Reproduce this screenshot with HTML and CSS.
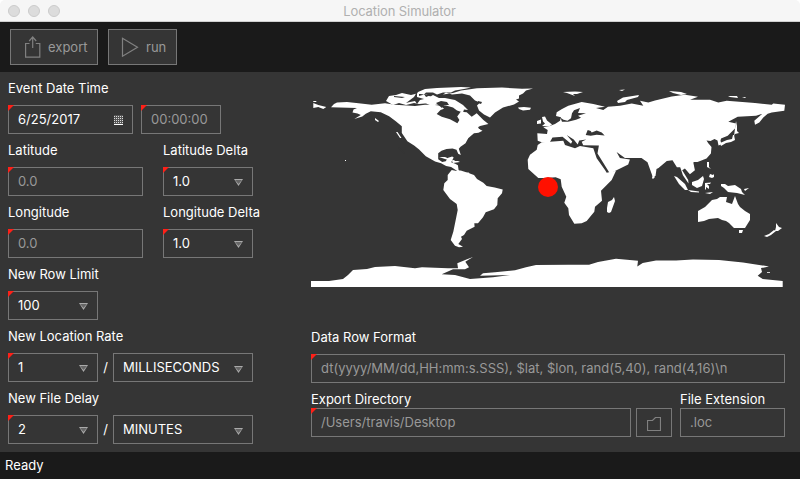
FILE: index.html
```html
<!DOCTYPE html>
<html lang="en">
<head>
<meta charset="utf-8">
<title>Location Simulator</title>
<link rel="stylesheet" href="styles.css">
</head>
<body>
<div class="window">
  <header class="titlebar">
    <div class="lights"><i></i><i></i><i></i></div>
    <span class="title">Location Simulator</span>
  </header>
  <nav class="toolbar">
    <button class="tool export"><svg width="16" height="22" viewBox="0 0 16 22"><path d="M4.500 7.500H.6v13.700h14.200V7.500h-4M7.700 12V1M4.200 5 7.700 1l3.500 4"/></svg><span>export</span></button>
    <button class="tool run"><svg width="18" height="21" viewBox="0 0 18 21"><path d="M1.500 1.300v18l15-9z"/></svg><span>run</span></button>
  </nav>
  <main class="content">
    <section class="settings">
      <div class="row"><div class="group"><label>Event Date Time</label>
        <div class="fields"><div class="field req w125"><span>6/25/2017</span><svg class="cal" width="9" height="10" viewBox="0 0 9 10"><path d="M0 1.500h9M0 3.500h9M0 5.500h9M0 7.500h9" stroke-dasharray="1 1"/><path class="base" d="M0 9.500h9"/></svg></div><div class="field req dim w80"><span>00:00:00</span></div></div></div></div>
      <div class="row"><div class="group"><label>Latitude</label><div class="field req dim w135">0.0</div></div><div class="group"><label>Latitude Delta</label><div class="field req w90">1.0<b class="arrow"></b></div></div></div>
      <div class="row"><div class="group"><label>Longitude</label><div class="field req dim w135">0.0</div></div><div class="group"><label>Longitude Delta</label><div class="field req w90">1.0<b class="arrow"></b></div></div></div>
      <div class="row"><div class="group"><label>New Row Limit</label><div class="field req w90">100<b class="arrow"></b></div></div></div>
      <div class="row"><div class="group"><label>New Location Rate</label><div class="fields tight"><div class="field req w90">1<b class="arrow"></b></div><span class="slash">/</span><div class="field w140"><span>MILLISECONDS</span><b class="arrow low"></b></div></div></div></div>
      <div class="row"><div class="group"><label>New File Delay</label><div class="fields tight"><div class="field req w90">2<b class="arrow"></b></div><span class="slash">/</span><div class="field w140"><span>MINUTES</span><b class="arrow low"></b></div></div></div></div>
    </section>
    <section class="output">
      <svg class="map" width="474" height="210" viewBox="311 80 474 210">
        <g class="land">
          <path d="M331 107.300L334 104l3-1.500 10-.5 11.500 1.300 13.200 1.400 13.300-1.400 10 1.400 20 1.300 10-1.300h8l8 1 3 3-3.500 1.200-3.800 4 5 2.800 8.300 2.600 7.400 4 2-3.300-2.200-3.500 3.500-4.800 6 .6 5 4.400 5-3.400 6.700 6.700 5 4-8.300 2-4 2.300 3 .6 3.400 1.800-4 2-4.500.6-5.800 5-2.700 5-5 3.500-1.700 2 2 6.200-2.600-1.300-1.700-4-4-1.200-6 .6-5 1.600-3.300 2.500v6l4 2.700 3.500-.7 2.500-3.400 4-1.300 1.500 1-2.500 4.800 4 1.500 2.700 1.500.7 4.700 4.300 3.300 6-.8.5 1.500-5-.5-3.300 1-5-4.300-5-3.300-5-1-5-2.700-6-1.700-9.300-5.300-6.700-6.600-5-4-6.700-4.400-5.600-8.300v-6.700l-6-5-6.700-5-8.300-4-10-1-5 2.500-3.500 2.800-8 2.500 6.500-4-3.300-1.500-5-1 1-3 3.500-1.500z"/>
          <path d="M313.300 101h3v1h-3zM313.300 103l5 2 8 2-3 2-5-2-5 1zM386 101l3-5 7-1 6-2 9 2 8-2v3l7-2 5 3-3 3 3 3-12 1-5-1-8 2-7-2-6 2zM418 92l7-3 12-1 12-.5 12-.5 10 .5-7 1.500-9 1.500-4 2-8 0-6 2-4-2h-7l-2 2-7-1zM420 99l8-1 5-3 6 3h6l10 2 8 5 5 5-4-.5-1 3-6-2-4-3-7-2-8-1-7 1-5-2z"/>
          <path d="M443 94.500l10-1.500 8-2.500 16-2.200 25-.8 20 1.300 11-.3-7 2-3 3-4 2v3l-3 1 3 2-5 3-11 3-8 5-5 5-6-3-5-4-2-5 3-3-5-2-5-5-8-2-10 1-6-2zM518 107.500l6-.5 7 .8-1 2-7 .7-4-1.500zM439 157l6 0 7 3 3 0-1 1-6-1zM452 161l6 0 2 1-7 1zM472 126l5-1 2 4 1 0 0 1-8-2zM396 132h1.500l4 6h-1.500zM375 118l4 3-1 1-3-2zM345 160h1v1h-1z"/>
          <path d="M447.700 175l4-5 5 1 4-.5 7 2.200 6.300 2.300 3 4 6.300 3.700 3.400 3.300 8 1.500 8 2-.7 3.800-4.300 5-.4 6.700-3.300 4.300-8.300 3-2.700 5-5 6h-3.700l.3 3.400-7.900 4-2.700 4.300-3 1.700 1 2.300-3.700 5 4.700 2.700-4 .5-4-1.500-4.300-5.700 2.600-8.300 2.400-11.700 2-10-1-6-6.700-5-6.700-9 1-6.700 3.400-3.300z"/>
          <path d="M541.700 142.300l-4-1.600-.4-7.400 9.700.7.700-4-4.400-2.700 5.700-1 6-2.300 5-3.300 1-3.400-5-1.300.7-3.700 5.300-3.300 6.300-3.300 13.400-3.700 11.600 2 11.700 2.700-9 1.300 7.300 2 4.700-3.300 12-1 11.700-2.300 11.600 2.300-3.300-5 8.300 1.700 6.700-2 16.700-4 13.300-1.700 13 2-8 3 20 0 8.300 2.700 8.400-1.700 28.300 2.300 16.700 1.700 1.600-1.300 11.700 1.300-.7 6-12.600 1.700-4 1.300-4.400 3.700-4 5-4.300 2.300-.7-4 8-7-6.300 2-18.300 1-9.400 5 7.700 1.700-1 5-7.300 7.300-6.700 2.700-.5 2.300 1 3.500-3 1.200-1-5-3-1.500-4 2-4-.5 2 3 3 3.500-.6 6.700-4.400 5-9 3.300h-4.300l1.700 8.300-5 4-5-5.600-2.700 1.600 6 9.700.3 3.700-5.600-8.400-2.700-8h-3.300l-4.400-7-5.700.7-8.300 7-2 1-1 7-3 .3-5-14-6-4.300-16.600 0-8.300-6 3.300 6 10 1.700-1.700 5-18.300 9-12.400-20 1.400-8-15.700-.4-1.500-3.500 4.500-2.100-7 .8-1.500 4-4-5-7-4.500 5.500 6.500-1.200 2.400-8.500-7-10 .7-3.400 6z"/>
          <path d="M541.700 142.300l8.300-.6 13.300-1 1.700 4.300 10 3.300 5-2.300 13.300 2.300 3.400 10 8.300 11.700 1.700 2.700 9.300-2-4.300 9.300-10.700 10.700 1 10-7 6-.7 5-7.600 9.300-5 2.200-7.400.5-5.300-8.700-.7-6.700-4-5.600 2-6-4.600-10-1-7.400-5-2-10.700.7h-6.700l-10-9-.6-9.300 2.300-5 6.700-5 1-4.700z"/>
          <path d="M607 212v-4l1-6 4-2 2-3 1 4-4 11-2 1zM537 121l4-1.500v4l-4 .5zM542 117l3-.5 2 4 5 4-3 2-7-.5 3-2.500-2-2zM563 92l12-.5 8 .5-6 2h-4l2 2-8-3zM617 101l6-3.500 16-2.500-1 2-11 3-2 2-7 1zM619 90l6-.5-3 1.500zM669 91l12 1 6 2-6 1-8-2zM728 96l9 0 1 2-8-1zM742 97l4 0-1 1zM736 121l1 5 0 5 2 2-4 1-1 2zM734 135l1 5-4 2-5 1-5 3-1-3 7-3 5-1 1-4zM707 151h1.500l-1 4-1-2zM693 161l1 1-3 2zM653 174l2 3-2 2-1-1z"/>
          <path d="M674 176l3 1 8 7 3 6-3 0-6-6zM692 182l6-2 5-4 1 3-2 7-5 2-5-3zM705 183l6-.5-1 1.500h-3l2 2 0 3-3-2v3l-1-1zM688 190l11 1.500 0 1-8-.5zM705 193l8-1-3 2zM721 184l4 0 3 2 7-1 6 4 1 3 3 3-8-2-9-1-4-4-3-2zM744 189l5-1-4 3zM707 162l2 0 0 5 2 2-4-2zM710 174l3 1 1-1v3l-2 1-3-1z"/>
          <path d="M698 211l7-4 7-7 5-1 3-2 7 0-1 5 6 2 3-8 3 8 2 3 5 4 5 3v6l-5 8-11 0-5-5-3-2-4-1-4-2-9 1-5 2-6 1zM739 230l4 0-1 3-3 0zM776 223l3 4 3 1-4 3-3 0 1-4zM774 230l2 1-5 4-4 2-3-1 5-2z"/>
          <path d="M311 281h18l14-2 5-4 5-5 14-1 8-2 20-1 20 2.300 7-1 13 .4 13 .6 10 0-.7-5 9.700-4 6-2.300-7.700 4.700 3.700 5.600-4 2-12 0-11.300 5 13.300.7 15 4 23-1.700 17-2.300-30 .7 3-2.400 12-1 20-2 11-3 10-2.300 33-.3 20 0 9-2.700 18-3.300 22 2-.7 5.700 5.400-3.400 13.300-2.600 20 0 17-1 26 .7 24 2.300 26 4-8 1.700 1 4-4.300 3.700 5 3.300 20 2V287H311z"/>
          <path d="M767 272h3v.8h-3z"/>
        </g>
        <g class="sea">
          <path d="M394 96l11 1-3 1-8-1zM406 103l8-6 3-5 0 5 7 2-4 1-3 4-2-3-5 1zM424 94l7 1-5 2zM436 103l5-2 6 1 2 3-5 0-2 3zM571 118.300l1-5 2-3 6-2.300-2 5 8 .3-8 2.400 3 2-5 2-8 2-6 0-1.500-4 3 2 4 1zM585.700 135l2-5 3 1 1 1.500 5-2 5 2 3 3-8-.7-6 1zM478 101l4 1-1 2-3-1zM399 147l6 6-1 1-6-6z"/>
        </g>
        <circle class="pin" cx="548" cy="187" r="10"/>
      </svg>
      <div class="group format"><label>Data Row Format</label><div class="field req dim"><span>dt(yyyy/MM/dd,HH:mm:s.SSS), $lat, $lon, rand(5,40), rand(4,16)\n</span></div></div>
      <div class="files">
        <div class="group dir"><label>Export Directory</label><div class="fields browse"><div class="field req dim"><span>/Users/travis/Desktop</span></div><button class="folder" aria-label="Browse"><svg width="14" height="14" viewBox="0 0 14 14"><path d="M.5 13.500v-10h5l3-3h5v13z"/></svg></button></div></div>
        <div class="group ext"><label>File Extension</label><div class="field dim">.loc</div></div>
      </div>
    </section>
  </main>
  <footer class="status">Ready</footer>
</div>
</body>
</html>
```

FILE: styles.css
```css
* { box-sizing: border-box; }
body { margin: 0; background: #fff; font: 13px/18px Inter, "Liberation Sans", sans-serif; color: #fff; }
.window { width: 800px; height: 479px; display: flex; flex-direction: column; border-radius: 5px 5px 0 0; overflow: hidden; }
.titlebar { position: relative; height: 22px; background: #f6f6f6; border-bottom: 1px solid #d0d0d0; display: flex; align-items: center; justify-content: center; color: #b0b0b0; }
.lights { position: absolute; left: 8px; top: 5px; display: flex; gap: 8px; }
.lights i { width: 12px; height: 12px; border-radius: 50%; background: #dcdcdc; border: 1px solid #cbcbcb; }
.title { letter-spacing: -.1px; padding-right: 1px; }
.toolbar { height: 50px; background: #1a1a1a; display: flex; gap: 10px; padding: 7px 10px; }
button { font: inherit; margin: 0; border: 1px solid #777; background: #353535; color: #999; border-radius: 0; }
.tool { height: 36px; display: flex; align-items: center; padding: 0 0 0 14px; }
.tool svg, .folder svg { fill: none; stroke: #808080; stroke-width: 1.2; }
.export { width: 88px; gap: 7px; }
.run { width: 69px; padding-left: 12px; gap: 7px; }
.content { height: 380px; background: #353535; display: flex; gap: 58px; padding: 7px 15px 0 8px; }
.settings { width: 245px; }
.row { height: 62px; display: flex; gap: 20px; }
.group { display: flex; flex-direction: column; gap: 8px; }
label { display: block; white-space: nowrap; }
.fields { display: flex; gap: 8px; }
.tight { gap: 0; }
.slash { width: 15px; line-height: 28px; text-align: center; }
.field { position: relative; height: 29px; border: 1px solid #777; padding: 0 9px; line-height: 27px; white-space: nowrap; }
.dim { color: #999; }
.req::before { content: ""; position: absolute; left: -1px; top: -1px; width: 6px; height: 6px; background: #ff2018; clip-path: polygon(0 0, 100% 0, 0 100%); }
.w80 { width: 80px; }
.w90 { width: 90px; }
.w125 { width: 125px; }
.w135 { width: 135px; }
.w140 { width: 140px; }
.arrow { position: absolute; right: 9px; top: 11px; width: 9px; height: 7px; background: #aaa; clip-path: polygon(0 0, 100% 0, 50% 100%); }
.arrow::after { content: ""; position: absolute; inset: 1px 1px 2px; background: #666; clip-path: polygon(0 0, 100% 0, 50% 100%); }
.low { top: 12px; }
.cal { position: absolute; right: 9px; top: 9px; background: #555; fill: none; stroke: #ddd; }
.cal .base { stroke: #fff; }
.output { width: 474px; padding-top: 1px; }
.map { display: block; margin-bottom: 38px; }
.land { fill: #fff; }
.sea { fill: #353535; }
.pin { fill: #ff1000; }
.files { display: flex; gap: 8px; margin-top: 7px; }
.files .group { gap: 0; }
.dir { width: 361px; }
.browse { gap: 5px; }
.browse .field { width: 320px; }
.folder { width: 36px; height: 29px; padding: 3px 0 0; display: flex; align-items: center; justify-content: center; }
.ext { width: 105px; }
.status { height: 27px; background: #1a1a1a; padding-left: 5px; line-height: 27px; }
```
